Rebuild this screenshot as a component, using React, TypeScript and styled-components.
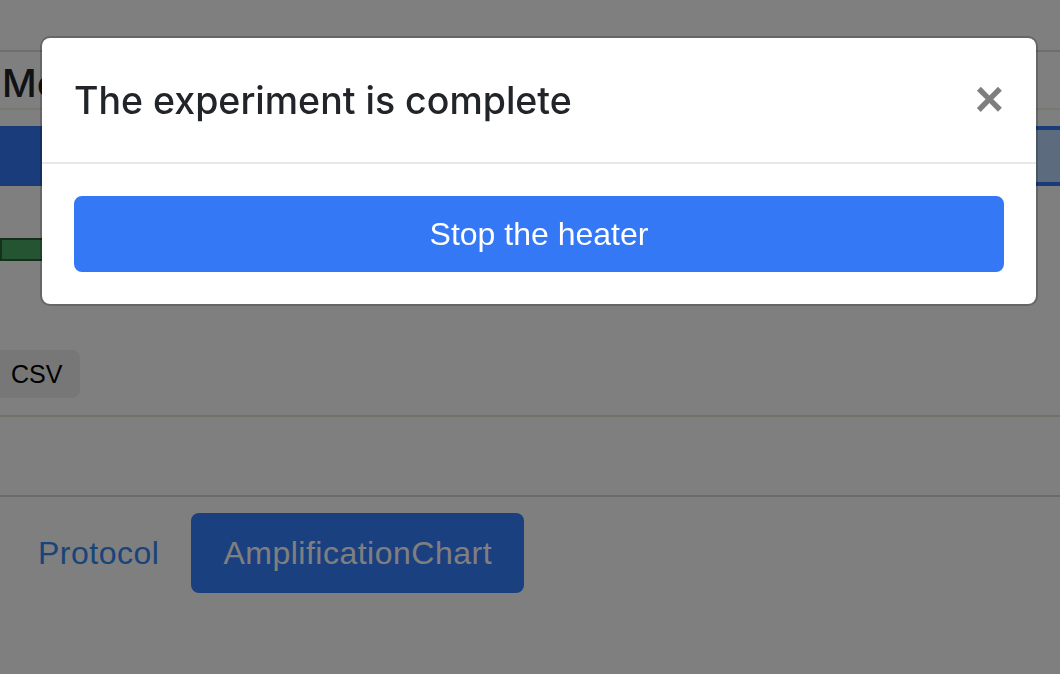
import React from "react";
import styled, { createGlobalStyle } from "styled-components";

const GlobalStyle = createGlobalStyle`
  html, body {
    margin: 0;
    padding: 0;
    background: #fff;
    overflow: hidden;
  }
  body {
    font-family: "Liberation Sans", Arial, sans-serif;
    color: #212529;
  }
  * {
    box-sizing: border-box;
  }
`;

const App: React.FC = () => {
  return (
    <>
      <GlobalStyle />
      <Page>
        <TopRule />
        <TitleRow>
          <PageTitle>Mo</PageTitle>
        </TitleRow>
        <Track>
          <TrackFill style={{ width: "62%" }} />
        </Track>
        <StatusBar />
        <Toolbar>
          <SmallButton>CSV</SmallButton>
        </Toolbar>
        <ChartArea />
        <Nav>
          <NavLink>Protocol</NavLink>
          <NavLink $active>AmplificationChart</NavLink>
        </Nav>
      </Page>

      <Backdrop />
      <Dialog>
        <Header>
          <Title>The experiment is complete</Title>
          <Close aria-label="Close">×</Close>
        </Header>
        <Body>
          <PrimaryButton>Stop the heater</PrimaryButton>
        </Body>
      </Dialog>
    </>
  );
};

export default App;

const Page = styled.div`
  height: 674px;
  padding-top: 50px;
  display: flex;
  flex-direction: column;
`;

const TopRule = styled.div`
  border-top: 2px solid #dcdcdc;
`;

const TitleRow = styled.div`
  height: 58px;
  display: flex;
  align-items: center;
  padding-left: 2px;
  border-bottom: 2px solid #f0f0dc;
`;

const PageTitle = styled.h2`
  margin: 0;
  font-family: Inter, "Liberation Sans", sans-serif;
  font-size: 38px;
  font-weight: 500;
  line-height: 1;
  padding-top: 6px;
  color: #212529;
`;

const Track = styled.div`
  margin-top: 16px;
  height: 60px;
  background: #bad6ff;
  border-top: 4px solid #3478f6;
  border-bottom: 4px solid #3478f6;
  display: flex;
`;

const TrackFill = styled.div`
  background: #3478f6;
  margin: -4px 0;
`;

const StatusBar = styled.div`
  margin-top: 52px;
  width: 420px;
  height: 23px;
  background: #4aa864;
  border: 2px solid #2a6238;
`;

const Toolbar = styled.div`
  margin-top: 89px;
  display: flex;
  padding-bottom: 17px;
  border-bottom: 2px solid #e4e4d2;
`;

const SmallButton = styled.button`
  height: 48px;
  padding: 0 18px 0 11px;
  border: none;
  border-radius: 0 8px 8px 0;
  background: #eeeeee;
  font-family: "Liberation Sans", Arial, sans-serif;
  font-size: 25px;
  color: #000;
`;

const ChartArea = styled.div`
  height: 80px;
  border-bottom: 2px solid #d4d4d4;
`;

const Nav = styled.div`
  display: flex;
  margin-top: 16px;
  padding-left: 6px;
`;

const NavLink = styled.a<{ $active?: boolean }>`
  display: block;
  padding: 16px 32px;
  font-size: 32px;
  line-height: 48px;
  letter-spacing: 0.5px;
  border-radius: 8px;
  color: ${(p) => (p.$active ? "#fff" : "#3388f5")};
  background: ${(p) => (p.$active ? "#3680ff" : "transparent")};
`;

const Backdrop = styled.div`
  position: fixed;
  inset: 0;
  background: rgba(0, 0, 0, 0.5);
`;

const Dialog = styled.div`
  position: fixed;
  top: 36px;
  left: 40px;
  width: 998px;
  background: #fff;
  border: 2px solid rgba(0, 0, 0, 0.2);
  border-radius: 10px;
  background-clip: padding-box;
`;

const Header = styled.div`
  display: flex;
  align-items: flex-start;
  justify-content: space-between;
  padding: 32px;
  border-bottom: 2px solid #e6e8ea;
`;

const Title = styled.h5`
  margin: 0;
  padding-top: 1px;
  height: 60px;
  font-family: Inter, "Liberation Sans", sans-serif;
  font-size: 37.5px;
  font-weight: 500;
  line-height: 60px;
  color: #212529;
`;

const Close = styled.button`
  padding: 32px;
  margin: -27px -32px -32px auto;
  background: transparent;
  border: 0;
  font-family: "Liberation Sans", Arial, sans-serif;
  font-size: 50px;
  font-weight: 700;
  line-height: 48px;
  color: #000;
  opacity: 0.5;
  text-shadow: 0 2px 0 #fff;
  cursor: pointer;
`;

const Body = styled.div`
  padding: 32px;
`;

const PrimaryButton = styled.button`
  display: block;
  width: 100%;
  padding: 12px 24px;
  font-family: "Liberation Sans", Arial, sans-serif;
  font-size: 32px;
  line-height: 48px;
  color: #fff;
  background: #3478f6;
  border: 2px solid #3478f6;
  border-radius: 8px;
  cursor: pointer;
`;
